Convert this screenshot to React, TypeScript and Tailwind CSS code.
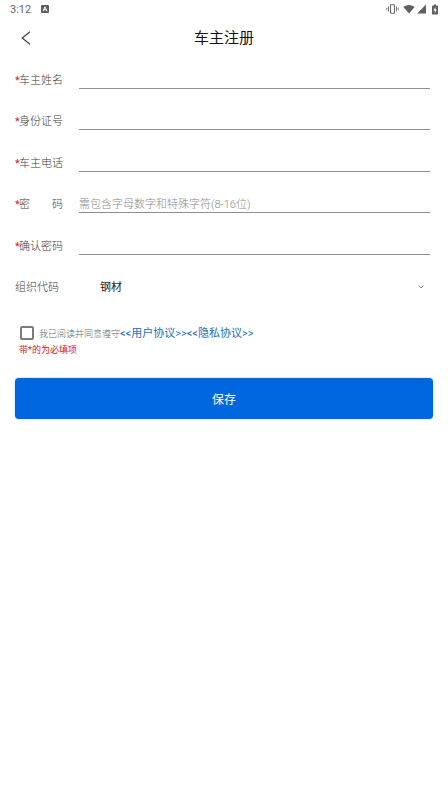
import React from 'react';

type Field = {
  id: string;
  label: React.ReactNode;
  type: string;
  placeholder?: string;
};

const fields: Field[] = [
  { id: 'name', label: '车主姓名', type: 'text' },
  { id: 'idCard', label: '身份证号', type: 'text' },
  { id: 'phone', label: '车主电话', type: 'tel' },
  {
    id: 'password',
    label: (
      <>
        <span>密</span>
        <span>码</span>
      </>
    ),
    type: 'password',
    placeholder: '需包含字母数字和特殊字符(8-16位)',
  },
  { id: 'confirm', label: '确认密码', type: 'password' },
];

function StatusBar() {
  return (
    <div className="flex h-[18px] items-center justify-between px-[10px] text-[#666]">
      <div className="flex items-center gap-[10px]">
        <span className="text-[11px] leading-none">3:12</span>
        <svg width="8" height="8" viewBox="0 0 8 8" aria-hidden="true">
          <rect width="8" height="8" rx="1" fill="#5c5c5c" />
          <path d="M2 6.2 4 1.8 6 6.2M2.8 4.8h2.4" fill="none" stroke="#fff" strokeWidth="1" />
        </svg>
      </div>
      <div className="flex items-center gap-[2px]">
        {/* vibrate */}
        <svg width="13" height="10" viewBox="0 0 13 10" fill="none" stroke="#6a6a6a" aria-hidden="true">
          <rect x="4.5" y="0.8" width="4" height="8.4" rx="0.6" strokeWidth="1.1" />
          <path d="M2.5 2.5v5M10.5 2.5v5M0.8 3.7v2.6M12.2 3.7v2.6" strokeWidth="0.9" />
        </svg>
        {/* wifi */}
        <svg className="ml-[2px]" width="12" height="10" viewBox="0 0 12 10" aria-hidden="true">
          <path d="M0.4 3C3.6 0.2 8.4 0.2 11.6 3L6 9.6Z" fill="#606060" />
        </svg>
        {/* signal */}
        <svg width="9" height="10" viewBox="0 0 9 10" aria-hidden="true">
          <path d="M9 0.6V9.4H0.2Z" fill="#606060" />
        </svg>
        {/* battery */}
        <svg className="ml-[4px]" width="6" height="11" viewBox="0 0 6 11" aria-hidden="true">
          <path d="M2 0.4h2v1h1.4q.6 0 .6.6v8q0 .6-.6.6H.6Q0 10.6 0 10V2q0-.6.6-.6H2Z" fill="#606060" />
          <path d="M3.5 3 1.4 6.6h1.4V9.2L4.7 5.6H3.5Z" fill="#fff" />
        </svg>
      </div>
    </div>
  );
}

export default function App() {
  const [values, setValues] = React.useState<Record<string, string>>({});
  const [org, setOrg] = React.useState('钢材');
  const [agreed, setAgreed] = React.useState(false);

  return (
    <div className="min-h-screen bg-white font-['Roboto','Noto_Sans_CJK_SC',sans-serif]">
      <StatusBar />

      <header className="grid h-10 grid-cols-[1fr_auto_1fr] items-center px-[15px]">
        <button type="button" aria-label="返回" className="flex h-8 w-6 items-center pl-[6px]">
          <svg width="10" height="14" viewBox="0 0 10 14" fill="none" aria-hidden="true">
            <path d="M9 0.7 1.2 7 9 13.3" stroke="#444" strokeWidth="1.2" />
          </svg>
        </button>
        <h1 className="text-[15px] leading-5 text-[#111]">车主注册</h1>
      </header>

      <form onSubmit={(e) => e.preventDefault()} className="px-[15px]">
        <div className="mt-[2px] grid h-[249px] grid-rows-6 pr-[3px] text-[11px]">
          {fields.map((f) => (
            <div key={f.id} className="flex items-center">
              <label htmlFor={f.id} className="flex w-16 shrink-0 text-[#3c3c3c]">
                <span className="w-[4px] text-[#d8201c]">*</span>
                <span className="flex w-11 justify-between font-light">{f.label}</span>
              </label>
              <input
                id={f.id}
                type={f.type}
                placeholder={f.placeholder}
                value={values[f.id] ?? ''}
                onChange={(e) => setValues({ ...values, [f.id]: e.target.value })}
                className="h-4 min-w-0 flex-1 border-b border-[#8e8e8e] text-[#222] outline-none placeholder:font-light placeholder:text-[#8a8a8a]"
              />
            </div>
          ))}

          <div className="flex items-center">
            <label htmlFor="org" className="w-16 shrink-0 font-light text-[#3c3c3c]">
              组织代码
            </label>
            <div className="relative flex-1">
              <select
                id="org"
                value={org}
                onChange={(e) => setOrg(e.target.value)}
                className="h-6 w-full appearance-none bg-transparent pl-[21px] text-[#222] outline-none"
              >
                <option value="钢材">钢材</option>
              </select>
              <svg
                className="pointer-events-none absolute right-[6px] top-[9px]"
                width="6"
                height="4"
                viewBox="0 0 6 4"
                fill="none"
                aria-hidden="true"
              >
                <path d="M0.5 0.5 3 3 5.5 0.5" stroke="#666" strokeWidth="0.8" />
              </svg>
            </div>
          </div>
        </div>

        <div className="mt-[15px] flex items-center pl-[5px] leading-4">
          <input
            id="agree"
            type="checkbox"
            checked={agreed}
            onChange={(e) => setAgreed(e.target.checked)}
            className="size-[14px] appearance-none rounded-[2px] border-2 border-[#7c7c7c] checked:bg-[#0066dd]"
          />
          <div className="flex flex-1 items-center pl-[5px] pt-[2px]">
            <label htmlFor="agree" className="text-[9px] font-light text-[#666]">
              我已阅读并同意遵守
            </label>
            <a href="#terms" className="text-[11px] text-[#1a6fbe]">
              &lt;&lt;用户协议&gt;&gt;
            </a>
            <a href="#privacy" className="text-[11px] text-[#1a6fbe]">
              &lt;&lt;隐私协议&gt;&gt;
            </a>
          </div>
        </div>
        <p className="pl-[4px] text-[9px] leading-4 text-[#d0201c]">带*的为必填项</p>

        <button
          type="submit"
          className="mt-5 h-[41px] w-full rounded-[4px] bg-[#0066dd] pt-[2px] text-[12px] text-white shadow-[0_0_2px_#7fc0f0]"
        >
          保存
        </button>
      </form>
    </div>
  );
}
